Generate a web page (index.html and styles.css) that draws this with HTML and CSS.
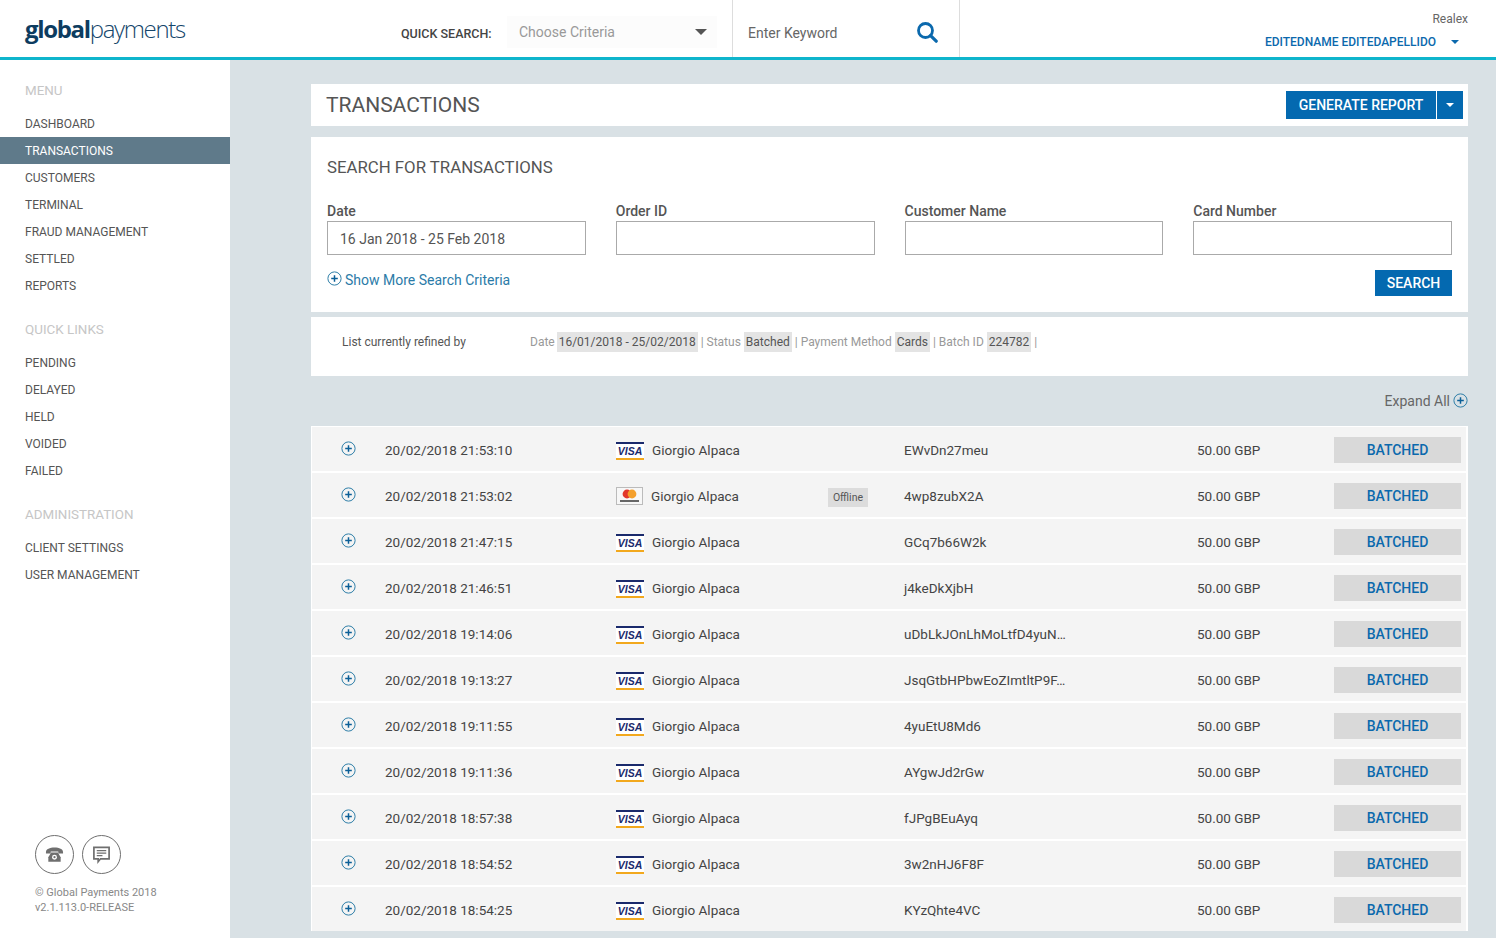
FILE: index.html
```html
<!DOCTYPE html>
<html lang="en">
<head>
<meta charset="utf-8">
<title>Transactions</title>
<link rel="stylesheet" href="styles.css">
</head>
<body>
<svg class="defs" width="0" height="0" aria-hidden="true">
  <symbol id="plus" viewBox="0 0 15 15"><circle cx="7.5" cy="7.5" r="6.6" fill="none" stroke="#2f7fa8" stroke-width="1"/><path d="M7.5 4.2v6.6M4.2 7.5h6.6" stroke="#0b5f97" stroke-width="1.5"/></symbol>
  <symbol id="mc" viewBox="0 0 27 18"><rect x=".5" y=".5" width="26" height="17" fill="#f7f7f7" stroke="#bbb"/><circle cx="11" cy="7" r="4.4" fill="#e2382c"/><circle cx="16" cy="7" r="4.4" fill="#f4a02c"/><rect x="4" y="13" width="19" height="2" fill="#666"/></symbol>
</svg>
<header class="topbar">
  <div class="logo"><b>global</b>payments</div>
  <div class="qs-label">QUICK SEARCH:</div>
  <div class="qs-select"><span>Choose Criteria</span><i class="caret caret-lg"></i></div>
  <div class="qs-keyword">
    <span>Enter Keyword</span>
    <svg class="search-icon" viewBox="0 0 22 22"><circle cx="9.5" cy="9.5" r="7" fill="none" stroke="#0b69ad" stroke-width="2.8"/><path d="M14.6 14.6l5.6 5.6" stroke="#0b69ad" stroke-width="3.2" stroke-linecap="round"/></svg>
  </div>
  <div class="account">
    <div class="org">Realex</div>
    <div class="user"><span>EDITEDNAME EDITEDAPELLIDO</span><i class="caret caret-blue"></i></div>
  </div>
</header>
<div class="layout">
  <aside class="sidebar">
    <h4>MENU</h4>
    <nav>
      <a>DASHBOARD</a>
      <a class="active">TRANSACTIONS</a>
      <a>CUSTOMERS</a>
      <a>TERMINAL</a>
      <a>FRAUD MANAGEMENT</a>
      <a>SETTLED</a>
      <a>REPORTS</a>
    </nav>
    <h4>QUICK LINKS</h4>
    <nav>
      <a>PENDING</a>
      <a>DELAYED</a>
      <a>HELD</a>
      <a>VOIDED</a>
      <a>FAILED</a>
    </nav>
    <h4>ADMINISTRATION</h4>
    <nav>
      <a>CLIENT SETTINGS</a>
      <a>USER MANAGEMENT</a>
    </nav>
    <div class="side-foot">
      <div class="round-row">
        <span class="round"><svg viewBox="0 0 20 20"><path fill="#6f6f6f" d="M1 7.500C1 4 5 2.500 10 2.500S19 4 19 7.500V9h-5V6.800H6V9H1z"/><path fill="#6f6f6f" d="M6.500 8h7l3 5v4.500H3.500V13z"/><circle cx="10" cy="12.800" r="2.600" fill="#fff"/><circle cx="10" cy="12.800" r="1.200" fill="#6f6f6f"/></svg></span>
        <span class="round"><svg viewBox="0 0 20 20"><path fill="none" stroke="#6f6f6f" stroke-width="1.800" d="M2 2.500h16v12H9l-2.500 3v-3H2z"/><path stroke="#6f6f6f" stroke-width="1.300" d="M5 6h10M5 8.600h10M5 11.200h6"/></svg></span>
      </div>
      <p>© Global Payments 2018<br>v2.1.113.0-RELEASE</p>
    </div>
  </aside>
  <main class="main">
    <section class="title-card">
      <h1>TRANSACTIONS</h1>
      <div class="btn-group"><button class="btn btn-gen">GENERATE REPORT</button><button class="btn btn-drop"><i class="caret caret-white"></i></button></div>
    </section>
    <section class="search-card">
      <h2>SEARCH FOR TRANSACTIONS</h2>
      <div class="fields">
        <label>Date<span class="input">16 Jan 2018 - 25 Feb 2018</span></label>
        <label>Order ID<span class="input"></span></label>
        <label>Customer Name<span class="input"></span></label>
        <label>Card Number<span class="input"></span></label>
      </div>
      <div class="search-actions">
        <a class="more"><svg class="plus"><use href="#plus"/></svg>Show More Search Criteria</a>
        <button class="btn btn-search">SEARCH</button>
      </div>
    </section>
    <section class="refine-card">
      <span class="refine-label">List currently refined by</span>
      <span class="refine-list">Date <mark>16/01/2018 - 25/02/2018</mark> | Status <mark>Batched</mark> | Payment Method <mark>Cards</mark> | Batch ID <mark>224782</mark> |</span>
    </section>
    <div class="expand">Expand All<svg class="plus"><use href="#plus"/></svg></div>
    <section class="list">
      <div class="row"><svg class="plus"><use href="#plus"/></svg><span>20/02/2018 21:53:10</span><div class="who"><span class="visa">VISA</span>Giorgio Alpaca</div><span>EWvDn27meu</span><span>50.00 GBP</span><span class="status">BATCHED</span></div>
      <div class="row"><svg class="plus"><use href="#plus"/></svg><span>20/02/2018 21:53:02</span><div class="who"><svg class="card-mc"><use href="#mc"/></svg>Giorgio Alpaca<em class="offline">Offline</em></div><span>4wp8zubX2A</span><span>50.00 GBP</span><span class="status">BATCHED</span></div>
      <div class="row"><svg class="plus"><use href="#plus"/></svg><span>20/02/2018 21:47:15</span><div class="who"><span class="visa">VISA</span>Giorgio Alpaca</div><span>GCq7b66W2k</span><span>50.00 GBP</span><span class="status">BATCHED</span></div>
      <div class="row"><svg class="plus"><use href="#plus"/></svg><span>20/02/2018 21:46:51</span><div class="who"><span class="visa">VISA</span>Giorgio Alpaca</div><span>j4keDkXjbH</span><span>50.00 GBP</span><span class="status">BATCHED</span></div>
      <div class="row"><svg class="plus"><use href="#plus"/></svg><span>20/02/2018 19:14:06</span><div class="who"><span class="visa">VISA</span>Giorgio Alpaca</div><span>uDbLkJOnLhMoLtfD4yuN…</span><span>50.00 GBP</span><span class="status">BATCHED</span></div>
      <div class="row"><svg class="plus"><use href="#plus"/></svg><span>20/02/2018 19:13:27</span><div class="who"><span class="visa">VISA</span>Giorgio Alpaca</div><span>JsqGtbHPbwEoZImtltP9F…</span><span>50.00 GBP</span><span class="status">BATCHED</span></div>
      <div class="row"><svg class="plus"><use href="#plus"/></svg><span>20/02/2018 19:11:55</span><div class="who"><span class="visa">VISA</span>Giorgio Alpaca</div><span>4yuEtU8Md6</span><span>50.00 GBP</span><span class="status">BATCHED</span></div>
      <div class="row"><svg class="plus"><use href="#plus"/></svg><span>20/02/2018 19:11:36</span><div class="who"><span class="visa">VISA</span>Giorgio Alpaca</div><span>AYgwJd2rGw</span><span>50.00 GBP</span><span class="status">BATCHED</span></div>
      <div class="row"><svg class="plus"><use href="#plus"/></svg><span>20/02/2018 18:57:38</span><div class="who"><span class="visa">VISA</span>Giorgio Alpaca</div><span>fJPgBEuAyq</span><span>50.00 GBP</span><span class="status">BATCHED</span></div>
      <div class="row"><svg class="plus"><use href="#plus"/></svg><span>20/02/2018 18:54:52</span><div class="who"><span class="visa">VISA</span>Giorgio Alpaca</div><span>3w2nHJ6F8F</span><span>50.00 GBP</span><span class="status">BATCHED</span></div>
      <div class="row"><svg class="plus"><use href="#plus"/></svg><span>20/02/2018 18:54:25</span><div class="who"><span class="visa">VISA</span>Giorgio Alpaca</div><span>KYzQhte4VC</span><span>50.00 GBP</span><span class="status">BATCHED</span></div>
    </section>
  </main>
</div>
</body>
</html>
```
FILE: styles.css
```css
* { box-sizing: border-box; }
html, body { margin: 0; height: 938px; overflow: hidden; }
body { font-family: Roboto, "Liberation Sans", sans-serif; font-size: 14px; color: #444; background: #d9e1e5; }
.defs { position: absolute; }
.caret { display: block; width: 0; height: 0; border-style: solid; border-color: transparent; border-bottom-width: 0; }
.caret-lg { border-width: 6px 6.5px 0; border-top-color: #555; }
.caret-blue { border-width: 4px 4px 0; border-top-color: #0b69ad; }
.caret-white { border-width: 4px 4px 0; border-top-color: #fff; }

.topbar { display: flex; height: 60px; background: #fff; border-bottom: 3px solid #0fb5cc; }
.logo { width: 376px; margin-left: 25px; font-family: "Open Sans", sans-serif; font-size: 24px; font-weight: 300; letter-spacing: -1.34px; line-height: 57px; color: #14466b; }
.logo b { font-weight: 700; color: #0d3c60; }
.qs-label { width: 106px; font-size: 12.5px; font-weight: 500; line-height: 67px; color: #444; }
.qs-select { display: flex; align-items: center; justify-content: space-between; width: 210px; height: 32px; margin: 16px 15px 0 0; padding: 0 10px 0 12px; background: #fcfcfc; color: #999; }
.qs-keyword { display: flex; align-items: center; justify-content: space-between; width: 228px; padding: 8px 21px 0 15px; border: solid #ddd; border-width: 0 1px; color: #666; }
.search-icon { width: 22px; height: 22px; margin-top: -2px; }
.account { flex: 1; display: flex; flex-direction: column; align-items: flex-end; padding: 11px 28px 0 0; font-size: 12px; }
.org { color: #666; line-height: 16px; }
.user { display: flex; align-items: center; gap: 15px; margin-top: 7px; padding-right: 9px; font-weight: 500; line-height: 16px; color: #0b69ad; }

.layout { display: flex; height: 878px; }
.sidebar { display: flex; flex-direction: column; width: 230px; padding-top: 20px; background: #fff; }
.sidebar h4 { margin: 0 0 10px; padding-left: 25px; font-size: 13.4px; font-weight: 400; line-height: 21px; height: 20px; color: #c6c6c6; }
.sidebar nav { margin-bottom: 20px; }
.sidebar a { display: block; height: 27px; padding: 1px 0 0 25px; font-size: 12px; line-height: 27px; color: #555; }
.sidebar a.active { background: #5f7a8a; color: #fff; }
.side-foot { margin-top: auto; padding: 0 0 23px 35px; }
.round-row { display: flex; gap: 8px; }
.round { display: flex; align-items: center; justify-content: center; width: 39px; height: 39px; border: 1px solid #6f6f6f; border-radius: 50%; }
.round svg { width: 19px; height: 19px; }
.side-foot p { margin: 11px 0 0; font-size: 11px; line-height: 15px; color: #888; }

.main { flex: 1; padding: 24px 28px 0 81px; overflow: hidden; }
.title-card { display: flex; align-items: center; justify-content: space-between; height: 42px; padding: 0 5px 0 15px; background: #fff; }
.title-card h1 { margin: 0; font-size: 21px; font-weight: 400; color: #555; }
.btn-group { display: flex; gap: 1px; }
.btn { display: flex; align-items: center; justify-content: center; border: 0; padding: 0; background: #0469b0; color: #fff; font: 500 14px Roboto, sans-serif; }
.btn-gen { width: 150px; height: 28px; }
.btn-drop { width: 26px; height: 28px; }
.search-card { height: 175px; margin-top: 11px; padding: 20px 16px 0; background: #fff; }
.search-card h2 { margin: 0; font-size: 16.8px; font-weight: 400; line-height: 20px; color: #555; }
.fields { display: grid; grid-template-columns: repeat(4, 1fr); gap: 30px; margin-top: 25px; }
.fields label { display: block; font-size: 14px; font-weight: 500; line-height: 18px; color: #555; }
.input { display: block; height: 34px; margin-top: 1px; padding-left: 12px; border: 1px solid #aaa; font-weight: 400; line-height: 34px; color: #555; }
.search-actions { display: flex; justify-content: space-between; margin-top: 15px; }
.more { display: flex; align-items: flex-start; gap: 3px; line-height: 20px; color: #2b7ba8; }
.more .plus { margin-top: 1px; }
.plus { width: 15px; height: 15px; flex: none; }
.btn-search { width: 77px; height: 26px; }
.refine-card { display: flex; height: 59px; margin-top: 5px; padding: 17px 31px; background: #fff; font-size: 12px; line-height: 16px; }
.refine-label { width: 188px; color: #555; }
.refine-list { color: #999; }
.refine-list mark { padding: 3px 2px; background: #e4e4e4; color: #555; }
.refine-list mark:first-child { margin-left: -1px; }
.expand { display: flex; justify-content: flex-end; align-items: center; gap: 3px; height: 50px; color: #666; }
.expand .plus { margin-top: -2px; }
.list { padding: 1px 2px 0 1px; background: #fff; }
.row { display: grid; grid-template-columns: 44px 231px 288px 293px 137px 127px; align-items: center; height: 44px; margin-bottom: 2px; padding: 2px 0 0 29px; background: #f4f4f4; font-size: 13.5px; color: #444; }
.row .plus { margin-top: -4px; }
.who { display: flex; align-items: center; gap: 8px; padding-right: 36px; }
.visa { display: block; width: 28px; height: 18px; margin-top: 1px; border: solid; border-width: 2.5px 0; border-color: #1a2a6c #fff #f2a81d; background: #fff; font: italic 700 10.5px/14px "Liberation Sans", sans-serif; text-align: center; color: #1a2a6c; }
.card-mc { width: 27px; height: 18px; }
.offline { margin: 2px 0 0 auto; padding: 0 5px; background: #dcdcdc; font-size: 10.5px; font-style: normal; line-height: 19px; color: #555; }
.status { height: 26px; background: #d9d9d9; font-size: 14px; font-weight: 500; line-height: 26px; text-align: center; color: #0b69ad; }
```
